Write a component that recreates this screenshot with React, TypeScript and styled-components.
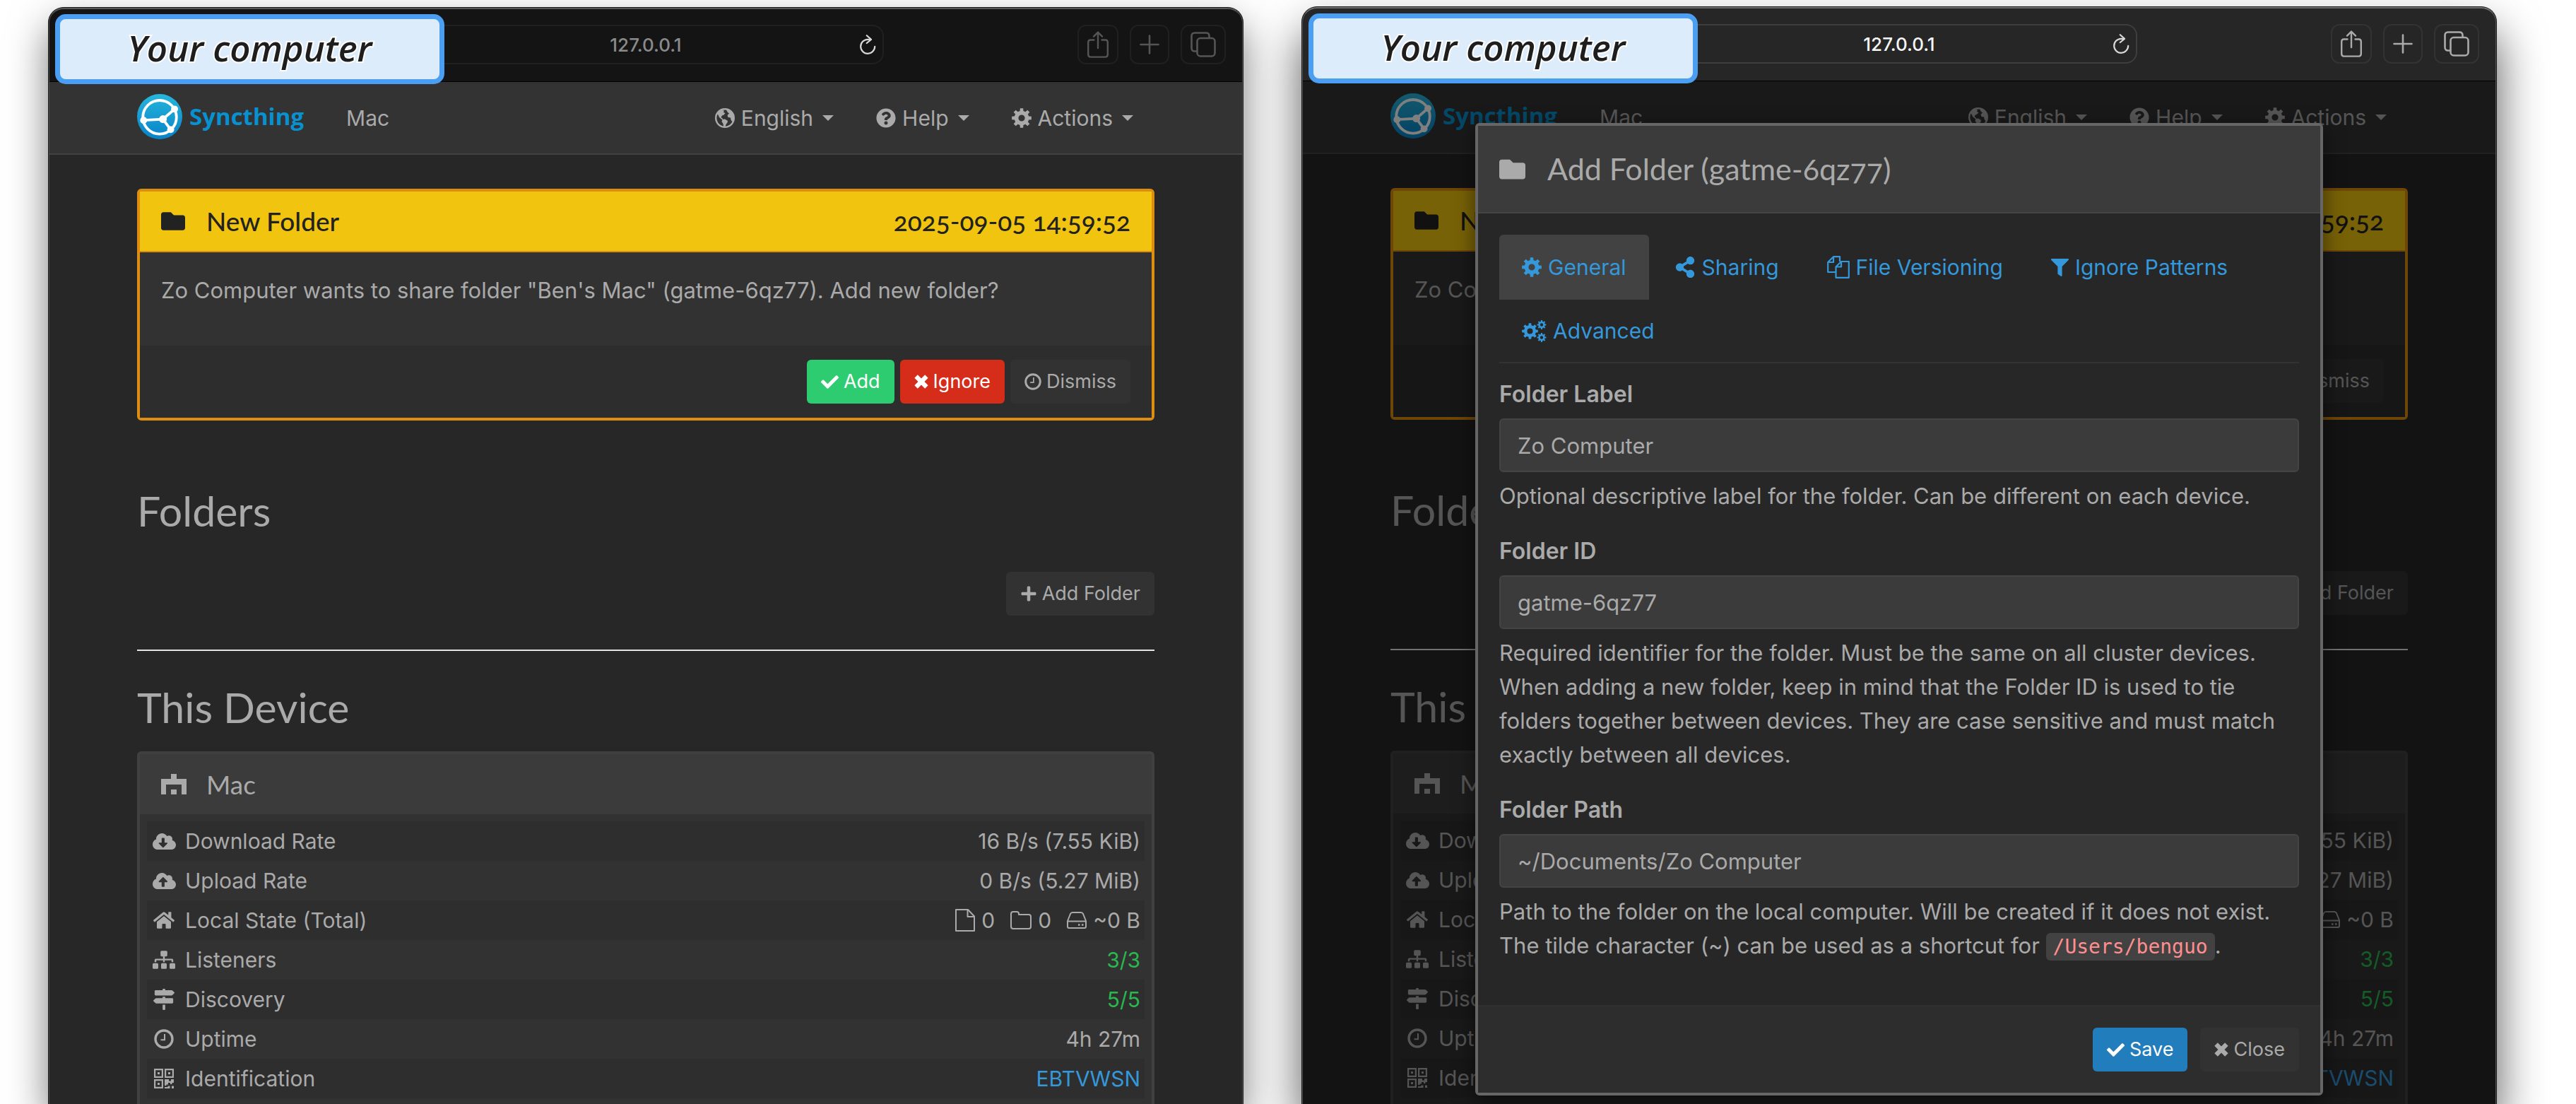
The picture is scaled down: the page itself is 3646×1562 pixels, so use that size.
import React from "react";
import styled, { createGlobalStyle, css } from "styled-components";
import {
  FaCheck,
  FaCloudDownloadAlt,
  FaCloudUploadAlt,
  FaFilter,
  FaFolder,
  FaHome,
  FaMapSigns,
  FaPlus,
  FaQuestionCircle,
  FaShareAlt,
  FaSitemap,
} from "react-icons/fa";

const sans = `Inter, "Liberation Sans", sans-serif`;
const heading = `Lato, "Open Sans", sans-serif`;

const GlobalStyle = createGlobalStyle`
  * { box-sizing: border-box; }
  body { margin: 0; background: #fff; font-family: ${sans}; color: #aaa; }
  h1, h2, p { margin: 0; font-weight: 400; }
  svg { display: block; flex: none; }
`;

/* ---------- icons ---------- */

function gearPath(cx: number, cy: number, outer: number, inner: number, hole: number, teeth = 8) {
  const step = (Math.PI * 2) / teeth;
  const pts: string[] = [];
  for (let i = 0; i < teeth; i++) {
    const mid = i * step - Math.PI / 2;
    const corners: [number, number][] = [
      [inner, -0.3],
      [outer, -0.2],
      [outer, 0.2],
      [inner, 0.3],
    ];
    for (const [r, k] of corners) {
      const a = mid + k * step;
      pts.push(`${(cx + r * Math.cos(a)).toFixed(2)} ${(cy + r * Math.sin(a)).toFixed(2)}`);
    }
  }
  return `M${pts.join("L")}ZM${cx - hole} ${cy}a${hole} ${hole} 0 1 0 ${hole * 2} 0a${hole} ${hole} 0 1 0 ${-hole * 2} 0Z`;
}

const Gear = () => (
  <svg width="28" height="28" viewBox="0 0 28 28" fill="currentColor" fillRule="evenodd" aria-hidden="true">
    <path d={gearPath(14, 14, 14, 10.4, 4.6)} />
  </svg>
);

const Gears = () => (
  <svg width="35" height="31" viewBox="0 0 35 31" fill="currentColor" fillRule="evenodd" aria-hidden="true">
    <path d={gearPath(11.5, 15.5, 11.5, 8.6, 4)} />
    <path d={gearPath(28, 6.5, 6.5, 4.8, 2.2)} />
    <path d={gearPath(28, 24.5, 6.5, 4.8, 2.2)} />
  </svg>
);

const Globe = () => (
  <svg width="28" height="28" viewBox="0 0 28 28" aria-hidden="true">
    <circle cx="14" cy="14" r="12.8" fill="none" stroke="currentColor" strokeWidth="2.4" />
    <g fill="currentColor">
      <path d="M3 8L8 2.5L13 3.5L12 6L14.5 7L12.5 9.5L10 10.5L8.5 13L10.5 14.5L12 17L9.5 16L6 13L4.5 9.5Z" />
      <path d="M10.5 16L14 15.5L18 18L17.5 20.5L15.5 23L14.5 26.5L12 26L11.5 22L9.5 19Z" />
      <path d="M16 2.5L21 3.5L25.5 9L26.5 15L24.5 19.5L22.5 16.5L22 13.5L18.5 13L17.5 10L20 7.5L18 6Z" />
    </g>
  </svg>
);

const Cross = () => (
  <svg width="20" height="20" viewBox="0 0 20 20" stroke="currentColor" strokeWidth="6.4" aria-hidden="true">
    <path d="M2.6 2.6L17.4 17.4M17.4 2.6L2.6 17.4" />
  </svg>
);

const QrCode = () => (
  <svg width="28" height="28" viewBox="0 0 28 28" aria-hidden="true">
    <g fill="none" stroke="currentColor" strokeWidth="2.2">
      <path d="M1.1 1.1H11.9V11.9H1.1ZM16.1 1.1H26.9V11.9H16.1ZM1.1 16.1H11.9V26.9H1.1Z" />
    </g>
    <path
      fill="currentColor"
      d="M5 5H8V8H5ZM20 5H23V8H20ZM5 20H8V23H5ZM15 15H21V17.5H24V15H28V20H25.5V22H23V20H20V22.5H17.5V24H15ZM19.5 24.5H22.5V28H15V26H19.5ZM25 24.5H28V28H25Z"
    />
  </svg>
);

const Clock = ({ size }: { size: number }) => (
  <svg width={size} height={size} viewBox="0 0 28 28" fill="none" stroke="currentColor" aria-hidden="true">
    <circle cx="14" cy="14" r="12" strokeWidth="3.4" />
    <path d="M15 7V15.2H9.5" strokeWidth="2" />
  </svg>
);

const Files = () => (
  <svg width="32" height="32" viewBox="0 0 32 32" fill="none" stroke="currentColor" strokeWidth="2.2" strokeLinejoin="round" aria-hidden="true">
    <path d="M12 23H1.2V9L9 1.2H18V8" />
    <path d="M9 1.2V9H1.2" />
    <path d="M12.5 15.5L20 8H30.8V30.8H12.5Z" />
    <path d="M20 8V15.5H12.5" />
  </svg>
);

const FileOutline = () => (
  <svg width="28" height="32" viewBox="0 0 28 32" fill="none" stroke="currentColor" strokeWidth="2" strokeLinejoin="round" aria-hidden="true">
    <path d="M1 1H18L27 10.5V31H1Z" />
    <path d="M17.5 1V11H27" />
  </svg>
);

const FolderOutline = () => (
  <svg width="30" height="26" viewBox="0 0 30 26" fill="none" stroke="currentColor" strokeWidth="2" strokeLinejoin="round" aria-hidden="true">
    <path d="M1 4Q1 1 4 1H9Q12 1 12 4V5H26Q29 5 29 8V22Q29 25 26 25H4Q1 25 1 22Z" />
  </svg>
);

const Drive = () => (
  <svg width="28" height="24" viewBox="0 0 28 24" fill="none" stroke="currentColor" strokeWidth="2" strokeLinejoin="round" aria-hidden="true">
    <path d="M1 13L5 3Q6 1 8 1H20Q22 1 23 3L27 13V21Q27 23 25 23H3Q1 23 1 21Z" />
    <path d="M1 13.5H27" />
    <path d="M16 18.5H18.5M21 18.5H23.5" strokeWidth="2.6" />
  </svg>
);

const Identicon = () => (
  <svg width="36" height="29" viewBox="0 0 5 4" fill="currentColor" shapeRendering="crispEdges" preserveAspectRatio="none" aria-hidden="true">
    <path d="M2 0H3V1H5V4H4V2.1H1V4H0V1H2Z" />
    <path d="M2 3H3V4H2Z" />
  </svg>
);

const Reload = () => (
  <svg width="24" height="28" viewBox="0 0 24 28" fill="none" stroke="currentColor" strokeWidth="2.2" strokeLinecap="round" strokeLinejoin="round">
    <path d="M16.5 6.8H12A10 10 0 1 0 22.2 16.8" />
    <path d="M10.8 1.2L17 6.8L10.8 12" />
  </svg>
);

const Share = () => (
  <svg width="30" height="38" viewBox="0 0 30 38" fill="none" stroke="currentColor" strokeWidth="2.4" strokeLinecap="round" strokeLinejoin="round">
    <path d="M9.5 12.5H4.5Q1.2 12.5 1.2 16V33Q1.2 36.6 4.5 36.6H25.5Q28.8 36.6 28.8 33V16Q28.8 12.5 25.5 12.5H20.5" />
    <path d="M15 24V1.8M9 7.6L15 1.6L21 7.6" />
  </svg>
);

const Plus = () => (
  <svg width="28" height="28" viewBox="0 0 28 28" fill="none" stroke="currentColor" strokeWidth="2.6" strokeLinecap="round">
    <path d="M14 1.5V26.5M1.5 14H26.5" />
  </svg>
);

const Tabs = () => (
  <svg width="36" height="36" viewBox="0 0 36 36" fill="none" stroke="currentColor" strokeWidth="2.6" strokeLinejoin="round">
    <rect x="9.5" y="9" width="25" height="25.5" rx="4.5" />
    <path d="M9.5 27.5H6Q1.5 27.5 1.5 23V6Q1.5 1.5 6 1.5H22Q26.5 1.5 26.5 6V9" />
  </svg>
);

const Logo = () => (
  <svg width="64" height="64" viewBox="0 0 117 117" aria-hidden="true">
    <defs>
      <linearGradient id="syncthing" x1="0" y1="0" x2="0" y2="1">
        <stop offset="0" stopColor="#26b6db" />
        <stop offset="1" stopColor="#0882c8" />
      </linearGradient>
    </defs>
    <circle cx="58.5" cy="58.5" r="58.5" fill="url(#syncthing)" />
    <g fill="none" stroke="#fff" strokeWidth="7">
      <circle cx="58.5" cy="60" r="43.5" />
      <path d="M97 39L67 65L17 68M67 65L87 92" />
    </g>
    <g fill="#fff">
      <circle cx="97" cy="39" r="9" />
      <circle cx="17" cy="68" r="9" />
      <circle cx="67" cy="65" r="10" />
      <circle cx="87" cy="92" r="9" />
    </g>
  </svg>
);

/* ---------- browser window ---------- */

const Desk = styled.div`
  display: flex;
  gap: 82px;
  min-height: 100vh;
  padding: 0 112px 0 68px;
  overflow: hidden;
`;

const Window = styled.section<{ $active?: boolean }>`
  position: relative;
  flex: 1 1 0;
  min-width: 0;
  display: flex;
  flex-direction: column;
  margin-top: ${(p) => (p.$active ? 9 : 10)}px;
  border: 1px solid #1c1c1c;
  border-bottom: 0;
  border-radius: 22px 22px 0 0;
  background: #272727;
  box-shadow: ${(p) =>
    p.$active ? "0 36px 66px rgba(0, 0, 0, 0.66)" : "0 26px 56px rgba(0, 0, 0, 0.52)"};

  &::after {
    content: "";
    position: absolute;
    inset: 0;
    border: 1px solid ${(p) => (p.$active ? "#555" : "#4c4c4c")};
    border-top: 2px solid ${(p) => (p.$active ? "#6e6e6e" : "#585858")};
    border-bottom: 0;
    border-radius: 21px 21px 0 0;
    pointer-events: none;
  }
`;

const Toolbar = styled.header<{ $active?: boolean }>`
  display: grid;
  grid-template-columns: 1fr 41% 1fr;
  align-items: start;
  height: 105px;
  padding: 24px 24px 0;
  border-bottom: 1px solid #000;
  border-radius: 21px 21px 0 0;
  background: ${(p) => (p.$active ? "#262626" : "#141414")};
  color: ${(p) => (p.$active ? "#aaa" : "#555")};
  --line: ${(p) => (p.$active ? "#3e3e3e" : "#202020")};
  --button-line: ${(p) => (p.$active ? "#333" : "#202020")};
  --address: ${(p) => (p.$active ? "#f4f4f4" : "#8a8a8a")};
`;

const Address = styled.div`
  grid-column: 2;
  position: relative;
  height: 56px;
`;

const AddressInput = styled.input`
  width: 100%;
  height: 100%;
  padding: 0 48px;
  border: 2px solid var(--line);
  border-radius: 16px;
  background: transparent;
  color: var(--address);
  font: 500 26px/32px ${sans};
  text-align: center;
`;

const ReloadButton = styled.button`
  position: absolute;
  top: 0;
  right: 11px;
  height: 100%;
  padding: 0;
  border: 0;
  background: none;
  color: #d8d8d8;
`;

const ToolButtons = styled.div`
  display: flex;
  justify-content: flex-end;
  gap: 16px;
`;

const ToolButton = styled.button`
  display: flex;
  align-items: center;
  justify-content: center;
  height: 56px;
  min-width: 56px;
  padding: 0 12px;
  border: 2px solid var(--button-line);
  border-radius: 12px;
  background: transparent;
  color: inherit;
`;

const Sticker = styled.div`
  position: absolute;
  z-index: 3;
  top: 9px;
  left: 9px;
  width: 551px;
  height: 99px;
  display: flex;
  align-items: center;
  justify-content: center;
  border: 7px solid #4a9ff2;
  border-radius: 15px;
  background: #ddecfa;
  color: #1e1e1e;
  font: italic 600 51px/64px "Open Sans", sans-serif;
  -webkit-text-stroke: 4px #fff;
  paint-order: stroke fill;
  padding-bottom: 6px;
`;

/* ---------- syncthing page ---------- */

const Page = styled.div`
  position: relative;
  flex: 1;
  display: flex;
  flex-direction: column;
`;

const Navbar = styled.nav`
  display: flex;
  align-items: center;
  height: 103px;
  padding: 0 125px;
  border-bottom: 2px solid #424242;
  background: #333;
  font-size: 30px;
  line-height: 48px;
`;

const Brand = styled.a`
  display: flex;
  align-items: center;
  gap: 10px;
  margin: 0 60px 4px 0;
  color: #0891d1;
  font: 700 33px/48px "Open Sans", sans-serif;
  text-decoration: none;
`;

const Menus = styled.div`
  display: flex;
  margin-left: auto;
`;

const MenuButton = styled.button`
  display: flex;
  align-items: center;
  gap: 9px;
  padding: 0 30px;
  border: 0;
  background: none;
  color: inherit;
  font: inherit;

  &::after {
    content: "";
    margin-left: 4px;
    border: 8px solid transparent;
    border-top-color: currentColor;
    border-bottom: 0;
  }
`;

const Main = styled.main`
  flex: 1;
  display: flex;
  flex-direction: column;
  padding: 48px 125px 0;
`;

const Notice = styled.section`
  border: 4px solid #dd8d10;
  border-radius: 6px;
  background: #323232;
`;

const NoticeHead = styled.header`
  display: flex;
  align-items: center;
  height: 86px;
  padding: 0 30px;
  border-bottom: 2px solid #dd8d10;
  background: #f1c40f;
  color: #222;
  font: 500 37px/48px ${heading};

  time {
    margin-left: auto;
    font-variant-numeric: oldstyle-nums;
  }
`;

const IconSlot = styled.span`
  display: flex;
  width: 64px;
`;

const NoticeText = styled.p`
  padding: 30px 30px 54px;
  font-size: 31px;
  line-height: 48px;
`;

const NoticeFoot = styled.footer`
  display: flex;
  justify-content: flex-end;
  gap: 8px;
  padding: 20px 30px;
  background: #2d2d2d;
`;

const tones = {
  plain: css`background: #323232; color: #aaa;`,
  success: css`background: #2ecc71; color: #fff;`,
  danger: css`background: #d62c1a; color: #fff;`,
  primary: css`background: #217dbb; color: #fff;`,
};

const Button = styled.button<{ $tone?: keyof typeof tones }>`
  display: inline-flex;
  align-items: center;
  gap: 7px;
  height: 62px;
  padding: 0 20px;
  border: 0;
  border-radius: 6px;
  font: 27px/40px ${sans};
  ${(p) => tones[p.$tone ?? "plain"]}
`;

const SectionTitle = styled.h1`
  font: 400 59px/64px ${heading};
`;

const FolderActions = styled.div`
  display: flex;
  justify-content: flex-end;
  padding: 54px 0 48px;
  border-bottom: 2px solid #e4e4e4;
`;

const FoldersBlock = styled.section`
  padding-top: 96px;
`;

const DeviceBlock = styled.section`
  flex: 1;
  display: flex;
  flex-direction: column;
  gap: 30px;
  padding-top: 48px;
`;

const DevicePanel = styled.div`
  flex: 1;
  border: 4px solid #404040;
  border-bottom: 0;
  border-radius: 6px 6px 0 0;
  background: #323232;
`;

const DeviceHead = styled.h2`
  display: flex;
  align-items: center;
  height: 85px;
  padding: 0 30px;
  background: #3b3b3b;
  font: 400 37px/48px ${heading};
`;

const StatTable = styled.table`
  width: calc(100% - 20px);
  margin: 10px 10px 0;
  border-collapse: collapse;
  font-size: 30px;
  line-height: 48px;

  tr:nth-child(odd) {
    background: #2e2e2e;
  }
  th,
  td {
    height: 56px;
    padding: 0 6px 0 4px;
    font-weight: 400;
    text-align: left;
  }
  td > * {
    justify-content: flex-end;
  }
  td {
    text-align: right;
  }
  a {
    color: #3498db;
    text-decoration: none;
  }
`;

const StatName = styled.span`
  display: flex;
  align-items: center;
  gap: 10px;
`;

const StatIcon = styled.span`
  display: flex;
  justify-content: center;
  width: 40px;
`;

const Good = styled.span`
  color: #29b74e;
`;

const Totals = styled.span`
  display: flex;
  gap: 22px;
`;

const Total = styled.span`
  display: flex;
  align-items: center;
  gap: 9px;
`;

/* ---------- dialog ---------- */

const Backdrop = styled.div`
  position: absolute;
  inset: 0;
  display: flex;
  align-items: flex-start;
  justify-content: center;
  padding-top: 59px;
  background: rgba(0, 0, 0, 0.5);
`;

const Dialog = styled.div`
  width: 71%;
  border: 4px solid #666;
  border-radius: 6px;
  background: #272727;
  box-shadow: 0 10px 30px rgba(0, 0, 0, 0.5);
`;

const DialogHead = styled.header`
  display: flex;
  align-items: center;
  padding: 30px;
  border-bottom: 2px solid #444;
  background: #3b3b3b;

  h2 {
    font: 400 43px/62px ${heading};
    font-variant-numeric: oldstyle-nums;
  }
`;

const DialogIcon = styled.span`
  display: flex;
  width: 68px;
`;

const DialogBody = styled.form`
  padding: 30px;
`;

const TabList = styled.div`
  display: flex;
  flex-wrap: wrap;
  column-gap: 4px;
  margin-bottom: 20px;
  border-bottom: 2px solid #333;
`;

const Tab = styled.button<{ $selected?: boolean }>`
  display: flex;
  align-items: center;
  gap: 9px;
  height: 92px;
  margin-bottom: -2px;
  padding: 0 32px;
  border: 0;
  border-radius: 6px 6px 0 0;
  background: ${(p) => (p.$selected ? "#424242" : "transparent")};
  color: #3498db;
  font: 30px/48px ${sans};
`;

const Field = styled.div`
  margin-bottom: 30px;
  font-size: 31px;
  line-height: 48px;
`;

const FieldLabel = styled.label`
  display: block;
  font-size: 32px;
  font-weight: 600;
`;

const FieldInput = styled.input`
  display: block;
  width: 100%;
  height: 76px;
  margin: 10px 0;
  padding: 0 24px;
  border: 2px solid #444;
  border-radius: 6px;
  background: #3b3b3b;
  color: #aaa;
  font: 31px/48px ${sans};
`;

const Code = styled.code`
  padding: 3px 10px;
  border-radius: 6px;
  background: #424242;
  color: #ff8f8f;
  font: 28px/32px "DejaVu Sans Mono", monospace;
`;

const DialogFoot = styled.footer`
  display: flex;
  justify-content: flex-end;
  gap: 18px;
  padding: 30px;
  border-top: 2px solid #303030;
  background: #2d2d2d;
`;

/* ---------- parts ---------- */

function Browser({ active, children }: { active?: boolean; children: React.ReactNode }) {
  return (
    <Window $active={active}>
      <Toolbar $active={active}>
        <Address>
          <AddressInput aria-label="Address" defaultValue="127.0.0.1" />
          <ReloadButton aria-label="Reload">
            <Reload />
          </ReloadButton>
        </Address>
        <ToolButtons>
          <ToolButton aria-label="Share"><Share /></ToolButton>
          <ToolButton aria-label="New tab"><Plus /></ToolButton>
          <ToolButton aria-label="Tab overview"><Tabs /></ToolButton>
        </ToolButtons>
      </Toolbar>
      <Page>{children}</Page>
      <Sticker>Your computer</Sticker>
    </Window>
  );
}

const stats: { name: string; icon: React.ReactNode; value: React.ReactNode }[] = [
  { name: "Download Rate", icon: <FaCloudDownloadAlt size={33} />, value: "16 B/s (7.55 KiB)" },
  { name: "Upload Rate", icon: <FaCloudUploadAlt size={33} />, value: "0 B/s (5.27 MiB)" },
  {
    name: "Local State (Total)",
    icon: <FaHome size={30} />,
    value: (
      <Totals>
        <Total><FileOutline />0</Total>
        <Total><FolderOutline />0</Total>
        <Total><Drive />~0 B</Total>
      </Totals>
    ),
  },
  { name: "Listeners", icon: <FaSitemap size={32} />, value: <Good>3/3</Good> },
  { name: "Discovery", icon: <FaMapSigns size={30} />, value: <Good>5/5</Good> },
  { name: "Uptime", icon: <Clock size={28} />, value: "4h 27m" },
  { name: "Identification", icon: <QrCode />, value: <a href="#id">EBTVWSN</a> },
];

function Dashboard() {
  return (
    <>
      <Navbar>
        <Brand href="#home"><Logo />Syncthing</Brand>
        <span>Mac</span>
        <Menus>
          <MenuButton><Globe />English</MenuButton>
          <MenuButton><FaQuestionCircle size={28} />Help</MenuButton>
          <MenuButton><Gear />Actions</MenuButton>
        </Menus>
      </Navbar>
      <Main>
        <Notice>
          <NoticeHead>
            <IconSlot><FaFolder size={34} /></IconSlot>
            <span>New Folder</span>
            <time>2025-09-05 14:59:52</time>
          </NoticeHead>
          <NoticeText>
            Zo Computer wants to share folder "Ben's Mac" (gatme-6qz77). Add new folder?
          </NoticeText>
          <NoticeFoot>
            <Button $tone="success"><FaCheck size={25} />Add</Button>
            <Button $tone="danger"><Cross />Ignore</Button>
            <Button><Clock size={24} />Dismiss</Button>
          </NoticeFoot>
        </Notice>
        <FoldersBlock>
          <SectionTitle>Folders</SectionTitle>
          <FolderActions>
            <Button><FaPlus size={24} />Add Folder</Button>
          </FolderActions>
        </FoldersBlock>
        <DeviceBlock>
          <SectionTitle>This Device</SectionTitle>
          <DevicePanel>
            <DeviceHead>
              <IconSlot><Identicon /></IconSlot>Mac
            </DeviceHead>
            <StatTable>
              <tbody>
                {stats.map((s) => (
                  <tr key={s.name}>
                    <th scope="row">
                      <StatName><StatIcon>{s.icon}</StatIcon>{s.name}</StatName>
                    </th>
                    <td>{s.value}</td>
                  </tr>
                ))}
              </tbody>
            </StatTable>
          </DevicePanel>
        </DeviceBlock>
      </Main>
    </>
  );
}

function AddFolderDialog() {
  return (
    <Backdrop>
      <Dialog role="dialog" aria-labelledby="dialog-title">
        <DialogHead>
          <DialogIcon><FaFolder size={37} /></DialogIcon>
          <h2 id="dialog-title">Add Folder (gatme-6qz77)</h2>
        </DialogHead>
        <DialogBody>
          <TabList role="tablist">
            <Tab type="button" role="tab" aria-selected $selected><Gear />General</Tab>
            <Tab type="button" role="tab"><FaShareAlt size={30} />Sharing</Tab>
            <Tab type="button" role="tab"><Files />File Versioning</Tab>
            <Tab type="button" role="tab"><FaFilter size={25} />Ignore Patterns</Tab>
            <Tab type="button" role="tab"><Gears />Advanced</Tab>
          </TabList>
          <Field>
            <FieldLabel htmlFor="folder-label">Folder Label</FieldLabel>
            <FieldInput id="folder-label" defaultValue="Zo Computer" />
            <p>Optional descriptive label for the folder. Can be different on each device.</p>
          </Field>
          <Field>
            <FieldLabel htmlFor="folder-id">Folder ID</FieldLabel>
            <FieldInput id="folder-id" defaultValue="gatme-6qz77" />
            <p>
              Required identifier for the folder. Must be the same on all cluster devices. When
              adding a new folder, keep in mind that the Folder ID is used to tie folders together
              between devices. They are case sensitive and must match exactly between all devices.
            </p>
          </Field>
          <Field>
            <FieldLabel htmlFor="folder-path">Folder Path</FieldLabel>
            <FieldInput id="folder-path" defaultValue="~/Documents/Zo Computer" />
            <p>
              Path to the folder on the local computer. Will be created if it does not exist. The
              tilde character (~) can be used as a shortcut for <Code>/Users/benguo</Code>.
            </p>
          </Field>
        </DialogBody>
        <DialogFoot>
          <Button $tone="primary"><FaCheck size={25} />Save</Button>
          <Button><Cross />Close</Button>
        </DialogFoot>
      </Dialog>
    </Backdrop>
  );
}

export default function App() {
  return (
    <>
      <GlobalStyle />
      <Desk>
        <Browser>
          <Dashboard />
        </Browser>
        <Browser active>
          <Dashboard />
          <AddFolderDialog />
        </Browser>
      </Desk>
    </>
  );
}
